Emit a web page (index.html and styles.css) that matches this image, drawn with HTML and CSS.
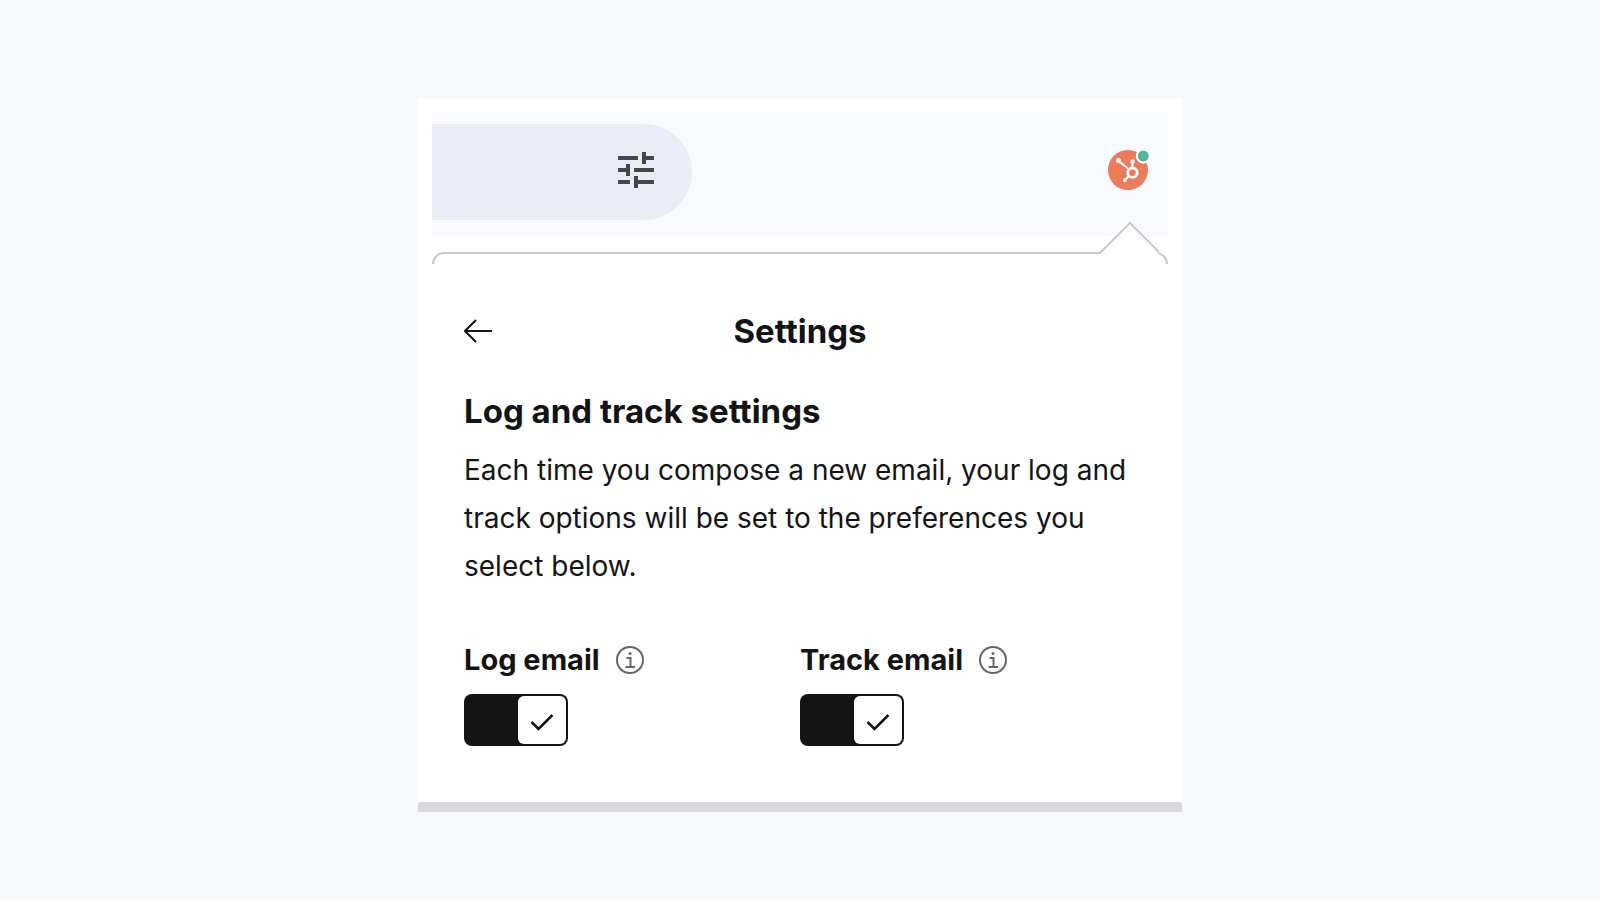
FILE: index.html
```html
<!DOCTYPE html>
<html lang="en">
<head>
  <meta charset="UTF-8" />
  <meta name="viewport" content="width=device-width, initial-scale=1.0" />
  <title>Settings</title>
  <link rel="stylesheet" href="styles.css">
</head>
<body>
  <main class="card">
    <header class="toolbar">
      <div class="search">
        <button class="icon-btn" type="button" aria-label="Search options">
          <svg width="48" height="48" viewBox="0 1 24 24" fill="#444749"><path d="M3 17v2h6v-2H3zM3 5v2h10V5H3zm10 16v-2h8v-2h-8v-2h-2v6h2zM7 9v2H3v2h4v2h2V9H7zm14 4v-2H11v2h10zm-6-4h2V7h4V5h-4V3h-2v6z"/></svg>
        </button>
      </div>
      <button class="icon-btn" type="button" aria-label="HubSpot">
        <svg width="44" height="48" viewBox="0 0 44 48">
          <circle cx="20" cy="22" r="20" fill="#ec7b5c"/>
          <g stroke="#fff" stroke-width="2" fill="#fff">
            <path d="M10 12.500L20 20.500M24.500 13V19M17 32L20.500 28.500"/>
            <circle cx="10.500" cy="12.500" r="1.500"/>
            <circle cx="24.500" cy="13.500" r="1.200"/>
            <circle cx="16.800" cy="32.300" r="1"/>
            <circle cx="24.500" cy="24.700" r="4.700" fill="none" stroke-width="2.800"/>
          </g>
          <circle cx="35.300" cy="8" r="6.500" fill="#4fb79e" stroke="#fff" stroke-width="2"/>
        </svg>
      </button>
    </header>

    <section class="popover">
      <div class="popover-edge"></div>
      <svg class="popover-arrow" width="64" height="34" viewBox="0 0 64 34">
        <path d="M2 34V31L32 1L60 29V34z" fill="#fff"/>
        <path d="M1 31H2L32 1L61 30" fill="none" stroke="#c9c9cb" stroke-width="2"/>
      </svg>

      <div class="title-row">
        <button class="icon-btn" type="button" aria-label="Back">
          <svg width="28" height="24" viewBox="0 0 28 24" fill="none" stroke="#141414" stroke-width="2"><path d="M12 1L1 12L12 23M1 12H28"/></svg>
        </button>
        <h1>Settings</h1>
      </div>

      <h2>Log and track settings</h2>
      <p>Each time you compose a new email, your log and track options will be set to the preferences you select below.</p>

      <div class="options">
        <div class="option">
          <div class="option-label">
            <label for="logEmail">Log email</label>
            <svg class="info" width="28" height="28" viewBox="0 0 28 28" fill="none" stroke="#666" stroke-width="2"><circle cx="14" cy="14" r="13"/><path d="M10.500 12H14.500V20.500M9.500 21H19"/><circle cx="14" cy="7.500" r="1.500" fill="#666" stroke="none"/></svg>
          </div>
          <div class="toggle">
            <input type="checkbox" id="logEmail" checked />
            <svg class="check" width="24" height="18" viewBox="0 0 24 18" fill="none" stroke="#141414" stroke-width="2.500"><path d="M1.500 9L8.500 16L22.500 2"/></svg>
          </div>
        </div>
        <div class="option">
          <div class="option-label">
            <label for="trackEmail">Track email</label>
            <svg class="info" width="28" height="28" viewBox="0 0 28 28" fill="none" stroke="#666" stroke-width="2"><circle cx="14" cy="14" r="13"/><path d="M10.500 12H14.500V20.500M9.500 21H19"/><circle cx="14" cy="7.500" r="1.500" fill="#666" stroke="none"/></svg>
          </div>
          <div class="toggle">
            <input type="checkbox" id="trackEmail" checked />
            <svg class="check" width="24" height="18" viewBox="0 0 24 18" fill="none" stroke="#141414" stroke-width="2.500"><path d="M1.500 9L8.500 16L22.500 2"/></svg>
          </div>
        </div>
      </div>
    </section>
  </main>
</body>
</html>
```
FILE: styles.css
```css
* {
  box-sizing: border-box;
}
body {
  margin: 0;
  padding: 98px 20px 20px;
  background: #f7f8fc;
  color: #141414;
  font-family: Inter, "Liberation Sans", sans-serif;
}
.card {
  max-width: 764px;
  margin: 0 auto;
  padding: 14px 14px 0;
  background: #fff;
  border-bottom: 10px solid #d7d9db;
  border-radius: 4px 4px 0 0;
}
.toolbar {
  display: flex;
  align-items: center;
  justify-content: space-between;
  padding: 12px 16px 16px 0;
  background: #f9fafe;
}
.search {
  display: flex;
  align-items: center;
  justify-content: flex-end;
  width: 260px;
  height: 96px;
  padding-right: 32px;
  background: #e9edf6;
  border-radius: 0 48px 48px 0;
}
.icon-btn {
  display: flex;
  padding: 0;
  border: none;
  background: none;
  cursor: pointer;
}
.popover {
  position: relative;
  margin-top: 16px;
  padding: 0 32px 56px;
}
.popover-edge {
  height: 12px;
  margin: 0 -32px;
  border: 2px solid #c9c9cb;
  border-bottom: none;
  border-radius: 14px 14px 0 0;
}
.popover-arrow {
  position: absolute;
  top: -30px;
  right: 6px;
}
.title-row {
  display: grid;
  grid-template-columns: 28px 1fr 28px;
  align-items: center;
  margin-top: 47px;
}
h1, h2 {
  margin: 0;
  font-size: 33px;
  line-height: 40px;
  font-weight: 700;
}
h1 {
  text-align: center;
}
h2 {
  margin-top: 40px;
}
p {
  margin: 15px 0 0;
  font-size: 28px;
  line-height: 48px;
  font-weight: 400;
}
.options {
  display: grid;
  grid-template-columns: 1fr 1fr;
  margin-top: 50px;
}
.option-label {
  display: flex;
  align-items: center;
  gap: 16px;
  font-size: 29px;
  line-height: 40px;
  font-weight: 700;
}
.toggle {
  position: relative;
  width: 104px;
  height: 52px;
  margin-top: 14px;
}
.toggle input {
  appearance: none;
  display: flex;
  justify-content: flex-end;
  width: 100%;
  height: 100%;
  margin: 0;
  padding: 2px;
  background: #141414;
  border-radius: 8px;
  cursor: pointer;
}
.toggle input::after {
  content: "";
  width: 48px;
  background: #fff;
  border-radius: 6px;
}
.toggle input:not(:checked) {
  justify-content: flex-start;
}
.toggle input:not(:checked) + .check {
  display: none;
}
.check {
  position: absolute;
  top: 19px;
  right: 14px;
  pointer-events: none;
}
```
